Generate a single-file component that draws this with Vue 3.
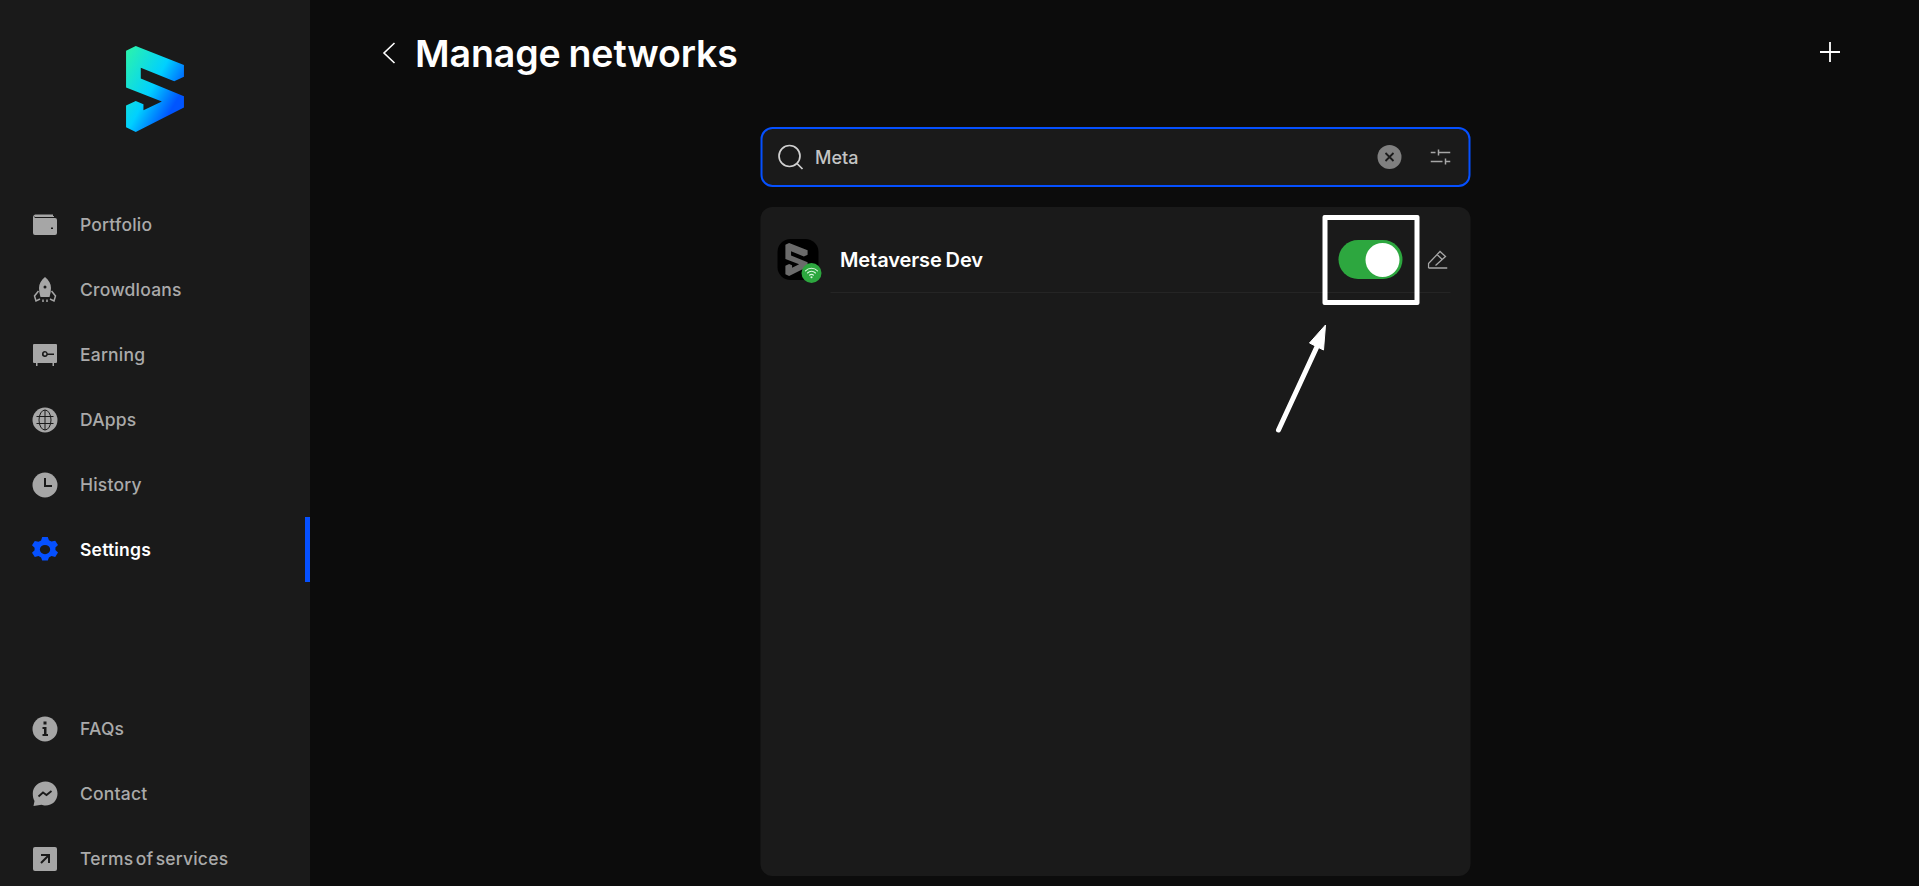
<template>
  <div class="layout">
    <aside class="sidebar">
      <div class="logo">
        <svg width="58" height="86" viewBox="78 48 173 257">
          <defs>
            <linearGradient id="logoFill" x1="0" y1="0" x2="1" y2="0.85">
              <stop offset="0" stop-color="#2df5a8" />
              <stop offset="0.5" stop-color="#00d0ff" />
              <stop offset="0.82" stop-color="#0055ff" />
            </linearGradient>
          </defs>
          <path fill="url(#logoFill)" d="M78 62 107 48 251 105V140L222 153 122 113V145L251 198V232L107 305 78 291V226L107 212 130 222V240L185 214 78 172Z" />
        </svg>
      </div>

      <nav class="nav-top">
        <a v-for="item in topItems" :key="item.label" class="nav-item" :class="{ active: item.active }">
          <span class="nav-icon" v-html="item.icon"></span>
          <span>{{ item.label }}</span>
        </a>
      </nav>

      <nav class="nav-bottom">
        <a v-for="item in bottomItems" :key="item.label" class="nav-item">
          <span class="nav-icon" v-html="item.icon"></span>
          <span>{{ item.label }}</span>
        </a>
      </nav>
    </aside>

    <main class="main">
      <header class="page-header">
        <button class="icon-btn back">
          <svg width="14" height="22" viewBox="0 0 14 22" fill="none" stroke="#fff" stroke-width="1.6">
            <path d="M12.5 1 2 11l10.500 10" />
          </svg>
        </button>
        <h1>Manage networks</h1>
        <button class="icon-btn plus">
          <svg width="22" height="22" viewBox="0 0 22 22" fill="none" stroke="#fff" stroke-width="1.8">
            <path d="M11 1v20M1 11h20" />
          </svg>
        </button>
      </header>

      <section class="content">
        <div class="search">
          <svg class="search-icon" width="26" height="26" viewBox="0 0 26 26" fill="none" stroke="#d0d0d0" stroke-width="1.7">
            <circle cx="12" cy="12" r="10.500" />
            <path d="m19.500 19.500 5.500 5.500" />
          </svg>
          <span class="search-text">Meta</span>
          <span class="clear">
            <svg width="12" height="12" viewBox="0 0 12 12" fill="none" stroke="#1a1a1a" stroke-width="1.8">
              <path d="m2 2 8 8M10 2l-8 8" />
            </svg>
          </span>
          <svg class="filter" width="20" height="18" viewBox="0 0 20 18" fill="none" stroke="#a6a6a6" stroke-width="1.500">
            <path d="M0 4.500h5M8 4.500h12M8 1.500v6M0 13.500h12M15 13.500h5M15 10.500v6" />
          </svg>
        </div>

        <div class="card">
          <div class="row">
            <div class="chain-icon">
              <svg width="28" height="33" viewBox="78 48 173 257">
                <path fill="#6b6b6b" d="M78 62 107 48 251 105V140L222 153 122 113V145L251 198V232L107 305 78 291V226L107 212 130 222V240L185 214 78 172Z" />
              </svg>
              <span class="badge">
                <svg width="14" height="12" viewBox="0 0 14 12" fill="none" stroke="#d8f5dc" stroke-width="1.100" stroke-linecap="round">
                  <path d="M1 3.800a8.500 8.500 0 0 1 12 0M3 6a5.600 5.600 0 0 1 8 0M5 8.200a2.800 2.800 0 0 1 4 0" />
                  <circle cx="7" cy="10.300" r="0.500" />
                </svg>
              </span>
            </div>
            <div class="row-body">
              <span class="row-name">Metaverse Dev</span>
              <span class="toggle"><span class="knob"></span></span>
              <svg class="edit" width="20" height="20" viewBox="0 0 20 20" fill="none" stroke="#a6a6a6" stroke-width="1.300">
                <path d="M1 19h19M1 19v-4.500L12.500 2.500l5.500 5L8 16.500M9.500 5.500l5.500 5.200" />
              </svg>
            </div>
          </div>

          <!-- tutorial markup drawn over the screenshot -->
          <span class="callout"></span>
          <svg class="arrow" width="70" height="120" viewBox="0 0 70 120" fill="none">
            <path d="M9 107 51 16" stroke="#fff" stroke-width="5" stroke-linecap="round" />
            <path d="M56 2 54 27 40 20Z" fill="#fff" stroke="#fff" stroke-width="1" />
          </svg>
        </div>
      </section>
    </main>
  </div>
</template>

<script setup>
const topItems = [
  {
    label: 'Portfolio',
    icon: '<svg width="26" height="24" viewBox="0 0 26 24"><path fill="#a6a6a6" d="M3 3h19v1H3z"/><path fill="#a6a6a6" fill-rule="evenodd" d="M3 5h20a2 2 0 0 1 2 2v13a2 2 0 0 1-2 2H3a2 2 0 0 1-2-2V4a3 3 0 0 1 2-2.500h18V3H3a1.200 1.200 0 0 0 0 2Zm16 9.500h2v1.600h-2Z"/></svg>',
  },
  {
    label: 'Crowdloans',
    icon: '<svg width="26" height="26" viewBox="0 0 26 26"><path fill="#a6a6a6" fill-rule="evenodd" d="M13 0c4 3 6 7 6 11 0 3-.5 6-1.500 9h-9C7.500 17 7 14 7 11c0-4 2-8 6-11Zm0 8.500a1.500 1.500 0 1 0 0 3 1.500 1.500 0 0 0 0-3Z"/><path fill="none" stroke="#a6a6a6" stroke-width="1.500" d="M6.500 14 2.500 19l1.500 5 4-2M19.500 14l4 5-1.500 5-4-2M11 22.500v2.500M15 22.500v2.500"/></svg>',
  },
  {
    label: 'Earning',
    icon: '<svg width="26" height="24" viewBox="0 0 26 24"><path fill="#a6a6a6" fill-rule="evenodd" d="M2 1h22a1 1 0 0 1 1 1v17a1 1 0 0 1-1 1H2a1 1 0 0 1-1-1V2a1 1 0 0 1 1-1Zm11 7a3 3 0 1 0 2.800 4H22v-1.600h-6.200A3 3 0 0 0 13 8Zm0 1.600a1.400 1.400 0 1 1 0 2.800 1.400 1.400 0 0 1 0-2.800Z"/><path fill="#a6a6a6" d="M4 20h1.500v3H4zM20.500 20H22v3h-1.500z"/></svg>',
  },
  {
    label: 'DApps',
    icon: '<svg width="26" height="26" viewBox="0 0 26 26"><circle cx="13" cy="13" r="12.500" fill="#a6a6a6"/><g fill="none" stroke="#1a1a1a" stroke-width="1"><ellipse cx="13" cy="13" rx="6" ry="10"/><path d="M13 3v20M4.500 9.500h17M4.500 16.500h17"/></g></svg>',
  },
  {
    label: 'History',
    icon: '<svg width="26" height="26" viewBox="0 0 26 26"><circle cx="13" cy="13" r="12.500" fill="#a6a6a6"/><path fill="none" stroke="#1a1a1a" stroke-width="2" d="M13 6v8h7"/></svg>',
  },
  {
    label: 'Settings',
    active: true,
    icon: '<svg width="26" height="26" viewBox="1.400 0 23.200 26" preserveAspectRatio="none"><path fill="#0550ff" fill-rule="evenodd" d="M10.500 0h5l1 3.200 2.300 1.300 3.300-.8 2.500 4.300-2.300 2.500v2.600l2.300 2.500-2.500 4.300-3.300-.8-2.300 1.300-1 3.200h-5l-1-3.200-2.300-1.300-3.300.8L1.400 15.800l2.300-2.500v-2.600L1.400 8.200l2.500-4.300 3.300.8 2.300-1.300ZM13 8a4.600 4.600 0 1 0 0 9.200A4.600 4.600 0 0 0 13 8Z"/></svg>',
  },
]

const bottomItems = [
  {
    label: 'FAQs',
    icon: '<svg width="26" height="26" viewBox="0 0 26 26"><circle cx="13" cy="13" r="12.500" fill="#a6a6a6"/><path fill="#1a1a1a" d="M11.500 5.500h3v3h-3zM10.500 11h4v7h1.500v2h-5.500v-2H12v-5h-1.500z"/></svg>',
  },
  {
    label: 'Contact',
    icon: '<svg width="26" height="26" viewBox="0 0 26 26"><path fill="#a6a6a6" d="M13.500 .5C20.500 .5 25.500 5.500 25.500 12.500S20.500 24.500 13.500 24.500c-1.500 0-3-.2-4-.7L1.500 25 2.500 20C1.200 18 .8 15 .8 12.500 .8 5.500 6.500 .5 13.500 .5Z"/><path fill="none" stroke="#1a1a1a" stroke-width="1.800" d="m6.500 15.500 4.500-4 3.500 2.500 5-4"/></svg>',
  },
  {
    label: 'Terms of services',
    icon: '<svg width="26" height="26" viewBox="0 0 26 26"><rect x="1" y="1" width="24" height="24" rx="2" fill="#a6a6a6"/><path fill="none" stroke="#1a1a1a" stroke-width="2" d="M9 9h8v8M17 9l-8 8"/></svg>',
  },
]
</script>

<style scoped>
.layout {
  display: flex;
  height: 886px;
  overflow: hidden;
  background: #0c0c0c;
  font-family: Inter, "Noto Sans", sans-serif;
}

.sidebar {
  width: 310px;
  flex-shrink: 0;
  height: 886px;
  display: flex;
  flex-direction: column;
  background: #1a1a1a;
}

.logo {
  display: flex;
  justify-content: center;
  padding: 46px 0 60px;
}

.logo svg {
  display: block;
}

.nav-top {
  display: flex;
  flex-direction: column;
}

.nav-bottom {
  display: flex;
  flex-direction: column;
  margin-top: 114px;
}

.nav-item {
  position: relative;
  flex-shrink: 0;
  display: flex;
  align-items: center;
  gap: 22px;
  height: 65px;
  padding-left: 32px;
  color: #aaa;
  font-size: 17.5px;
  font-weight: 500;
  letter-spacing: 0.2px;
  word-spacing: -2.5px;
}

.nav-item.active {
  color: #fff;
  font-weight: 600;
}

.nav-item.active::after {
  content: "";
  position: absolute;
  right: 0;
  top: 0;
  width: 5px;
  height: 65px;
  background: #0550ff;
}

.nav-icon {
  width: 26px;
  height: 26px;
  display: flex;
  align-items: center;
  justify-content: center;
}

.main {
  flex: 1;
  min-width: 0;
}

.page-header {
  display: flex;
  align-items: center;
  height: 106px;
  padding: 0 78px 0 72px;
}

.page-header h1 {
  margin: 0 0 0 19px;
  font-size: 37.5px;
  font-weight: 600;
  letter-spacing: -0.1px;
  word-spacing: -1.5px;
  color: #fff;
  flex: 1;
}

.icon-btn {
  padding: 0;
  border: none;
  background: none;
  display: flex;
}

.plus {
  margin-bottom: 2px;
}

.content {
  width: 710px;
  margin: 0 auto;
  transform: translateX(0.5px);
}

.search {
  height: 60px;
  box-sizing: border-box;
  margin-top: 21px;
  display: flex;
  align-items: center;
  padding: 0 18px 0 15px;
  background: #1a1a1a;
  border: 2px solid #0550ff;
  border-radius: 12px;
}

.search-text {
  flex: 1;
  margin-left: 12px;
  font-size: 18px;
  font-weight: 500;
  color: #c4c4c4;
}

.clear {
  width: 24px;
  height: 24px;
  border-radius: 50%;
  background: #808080;
  display: flex;
  align-items: center;
  justify-content: center;
  margin-right: 29px;
}

.card {
  position: relative;
  height: 669px;
  margin-top: 20px;
  padding: 32px 20px 0 17px;
  box-sizing: border-box;
  background: #1a1a1a;
  border-radius: 12px;
}

.row {
  display: flex;
}

.chain-icon {
  position: relative;
  width: 41px;
  height: 41px;
  border-radius: 13px;
  background: #000;
  display: flex;
  align-items: center;
  justify-content: center;
  padding-right: 2px;
  box-sizing: border-box;
}

.badge {
  position: absolute;
  right: -3px;
  bottom: -3px;
  width: 20px;
  height: 20px;
  border-radius: 50%;
  background: #2da73f;
  display: flex;
  align-items: center;
  justify-content: center;
}

.row-body {
  flex: 1;
  height: 54px;
  margin-left: 12px;
  padding-left: 10px;
  box-sizing: border-box;
  display: flex;
  align-items: flex-start;
  border-bottom: 1px solid #252525;
}

.row-name {
  flex: 1;
  margin-top: 9px;
  font-size: 20px;
  font-weight: 600;
  letter-spacing: -0.1px;
  word-spacing: -1px;
  color: #fff;
}

.toggle {
  width: 64px;
  height: 39px;
  margin-top: 1px;
  border-radius: 20px;
  background: #2da73f;
  display: flex;
  align-items: center;
  justify-content: flex-end;
  padding-right: 3px;
  box-sizing: border-box;
}

.knob {
  width: 34px;
  height: 34px;
  border-radius: 50%;
  background: #fff;
}

.edit {
  margin: 10px 3px 0 25px;
}

.callout {
  position: absolute;
  left: 562px;
  top: 8px;
  width: 97px;
  height: 90px;
  box-sizing: border-box;
  border: 5px solid #fff;
  border-radius: 2px;
}

.arrow {
  position: absolute;
  left: 509px;
  top: 116px;
}
</style>

<style>
body {
  background: #0c0c0c;
}
</style>
